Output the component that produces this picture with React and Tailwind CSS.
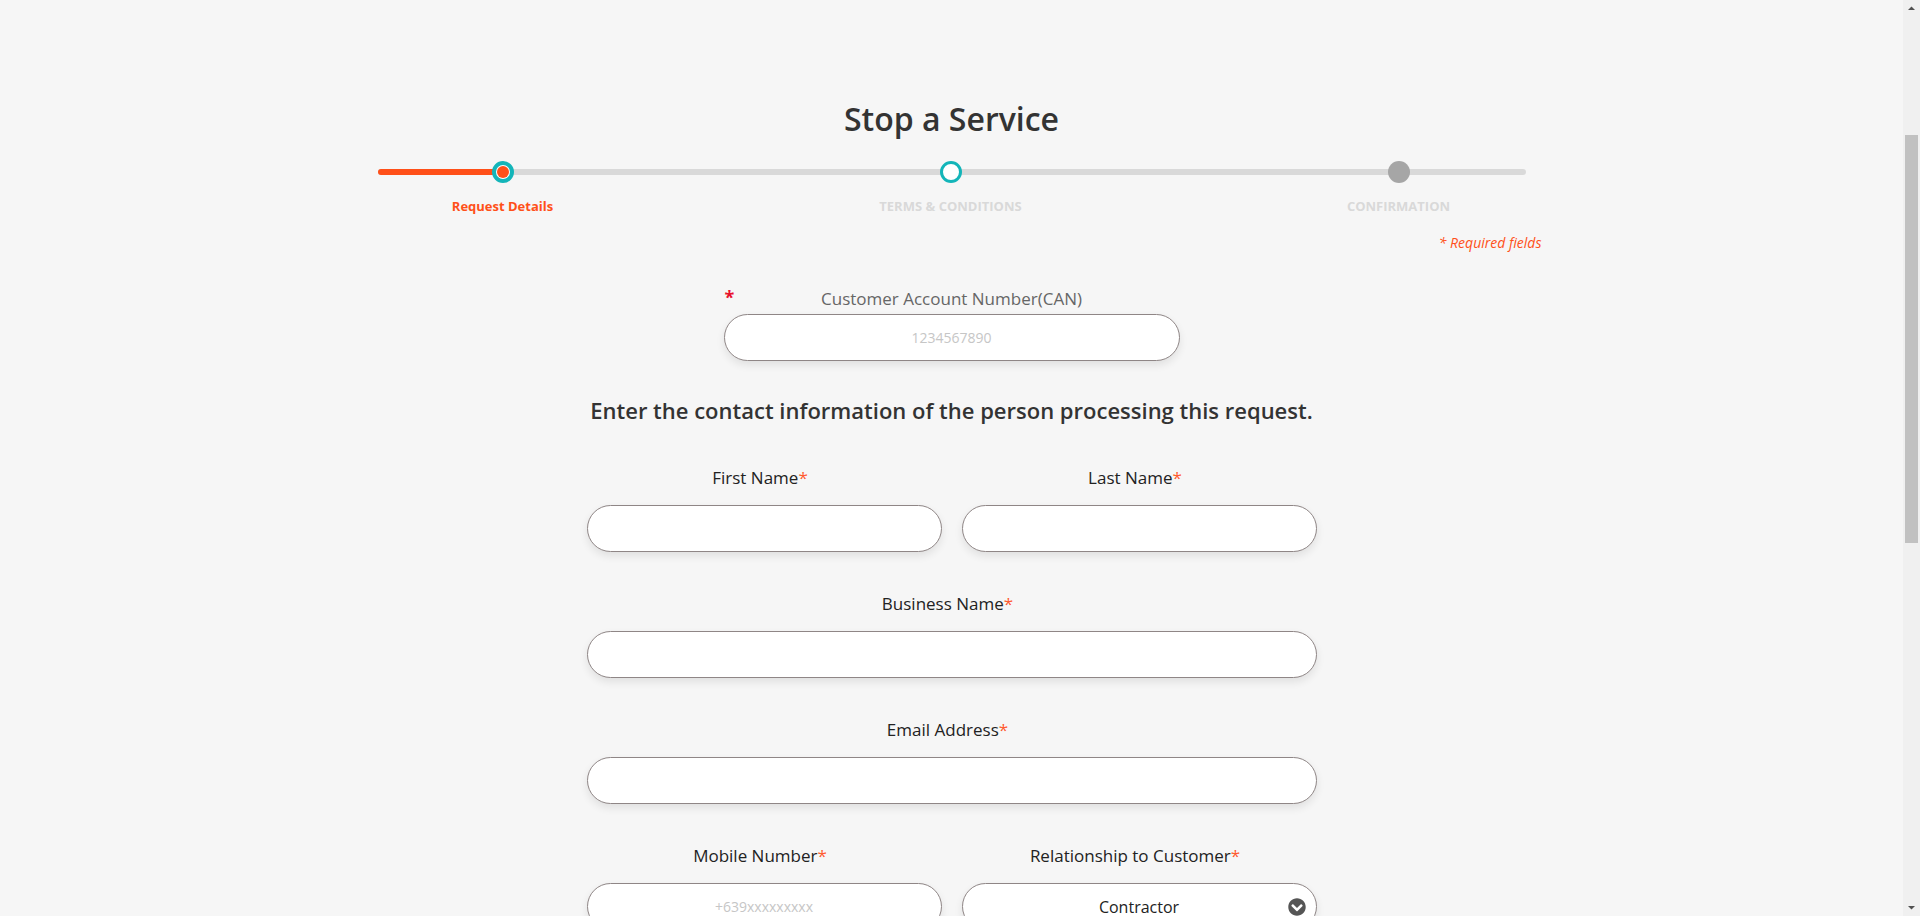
import React from 'react';
import { FaChevronCircleDown } from 'react-icons/fa';

const steps = [
    { label: 'Request Details', state: 'current' },
    { label: 'TERMS & CONDITIONS', state: 'next' },
    { label: 'CONFIRMATION', state: 'todo' },
];

const StepDot = ({ state }) => {
    if (state === 'current') {
        return (
            <span className="flex items-center justify-center h-[22px] w-[22px] rounded-full border-4 border-[#13b5b9] bg-white">
                <span className="h-[12px] w-[12px] rounded-full bg-[#ff5019]" />
            </span>
        );
    }
    if (state === 'next') {
        return <span className="block h-[22px] w-[22px] rounded-full border-[3px] border-[#13b5b9] bg-white" />;
    }
    return <span className="block h-[22px] w-[22px] rounded-full bg-[#a6a6a6]" />;
};

const Label = ({ children }) => (
    <label className="block pr-[8px] text-center text-[17px] leading-[24px] text-[#222]">
        {children}<span className="text-[#ff5a2e]">*</span>
    </label>
);

const inputCls =
    'block w-full h-[47px] rounded-full border border-[#8f8686] bg-white text-center text-[14px] outline-none shadow-[0_4px_9px_rgba(0,0,0,0.09)] placeholder:text-[#c6c6c6]';

const Field = ({ label, placeholder }) => (
    <div className="flex flex-col gap-[15px]">
        <Label>{label}</Label>
        <input className={inputCls} placeholder={placeholder} />
    </div>
);

// classic window scrollbar, page is scrolled part way
const Scrollbar = () => (
    <div className="w-[17px] h-full bg-[#f0f0f0] flex flex-col items-center">
        <svg width="17" height="17" viewBox="0 0 17 17"><path d="M5 10 L8.5 6.5 L12 10 Z" fill="#505050" /></svg>
        <div className="mt-[118px] h-[408px] w-[13px] bg-[#c1c1c1]" />
        <div className="flex-1" />
        <svg width="17" height="17" viewBox="0 0 17 17"><path d="M5 7 L8.5 10.5 L12 7 Z" fill="#505050" /></svg>
    </div>
);

export default function App() {
    return (
        <div className="flex h-screen overflow-hidden bg-[#f6f6f6] font-['Open_Sans',sans-serif]">
            <main className="flex-1 overflow-hidden pt-[97px]">
                <h1 className="text-center text-[32px] leading-[44px] font-semibold text-[#333]">Stop a Service</h1>

                {/* progress */}
                <div className="relative w-[1148px] mx-auto mt-[20px]">
                    <div className="absolute left-0 right-0 top-[8px] h-[6px] rounded-full bg-[#d9d9d9]" />
                    <div className="absolute left-0 top-[8px] h-[6px] w-[120px] rounded-full bg-[#ff5019]" />
                    <div className="relative flex pl-[114px] gap-[426px]">
                        {steps.map(s => <StepDot key={s.label} state={s.state} />)}
                    </div>
                </div>
                <div className="w-[1148px] mx-auto mt-[14px] flex pl-[25px] gap-[248px]">
                    {steps.map((s, i) => (
                        <div
                            key={s.label}
                            className={`w-[200px] text-center text-[13px] leading-[18px] font-bold ${i === 0 ? 'text-[#ff5019]' : 'text-[#d9d9d9]'}`}
                        >
                            {s.label}
                        </div>
                    ))}
                </div>

                <div className="w-[1180px] mx-auto mt-[18px] text-right text-[14px] leading-[20px] italic text-[#ff5019]">
                    * Required fields
                </div>

                {/* CAN */}
                <div className="relative w-[456px] mx-auto mt-[34px]">
                    <span className="absolute left-[1px] top-[1px] text-[18px] leading-[18px] font-bold text-[#e8112d]">*</span>
                    <label className="block text-center text-[17px] leading-[24px] text-[#666]">Customer Account Number(CAN)</label>
                    <input className={`${inputCls} mt-[3px]`} placeholder="1234567890" />
                </div>

                <h2 className="mt-[34px] text-center text-[22px] leading-[30px] font-semibold text-[#333]">
                    Enter the contact information of the person processing this request.
                </h2>

                <div className="w-[730px] mx-auto mt-[41px] flex flex-col gap-[40px]">
                    <div className="grid grid-cols-2 gap-[20px]">
                        <Field label="First Name" />
                        <Field label="Last Name" />
                    </div>
                    <Field label="Business Name" />
                    <Field label="Email Address" />
                    <div className="grid grid-cols-2 gap-[20px]">
                        <Field label="Mobile Number" placeholder="+639xxxxxxxxx" />
                        <div className="flex flex-col gap-[15px]">
                            <Label>Relationship to Customer</Label>
                            <div className="relative flex items-center justify-center h-[47px] rounded-full border border-[#8f8686] bg-white shadow-[0_4px_9px_rgba(0,0,0,0.09)]">
                                <span className="text-[16px] text-[#222]">Contractor</span>
                                <FaChevronCircleDown className="absolute right-[10px] text-[#555]" size={18} />
                            </div>
                        </div>
                    </div>
                </div>
            </main>
            <Scrollbar />
        </div>
    );
}
